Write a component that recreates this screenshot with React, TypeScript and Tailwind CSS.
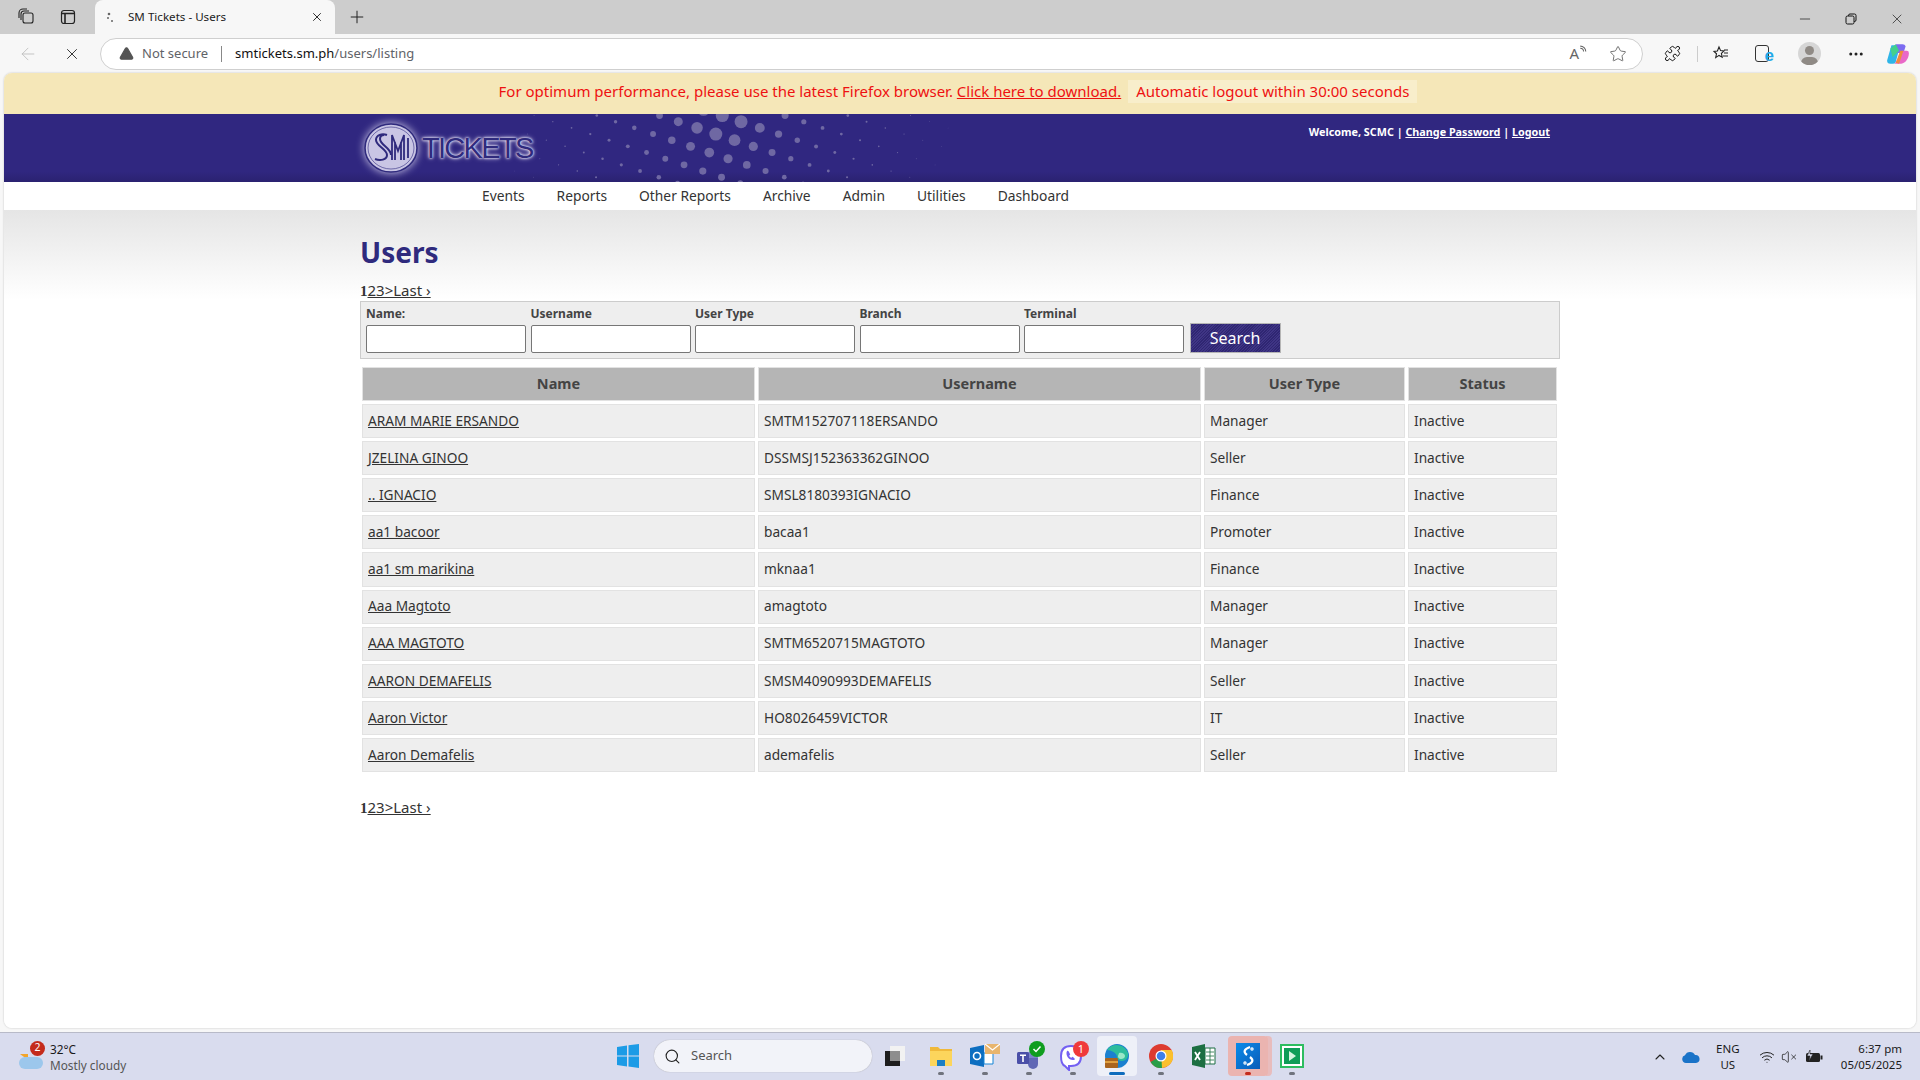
import {
  ArrowLeft,
  ChevronUp,
  Ellipsis,
  Minus,
  Plus,
  Puzzle,
  Search,
  Star,
  TriangleAlert,
  VolumeX,
  Wifi,
  X,
} from "lucide-react";

const rows = [
  ["ARAM MARIE ERSANDO", "SMTM152707118ERSANDO", "Manager"],
  ["JZELINA GINOO", "DSSMSJ152363362GINOO", "Seller"],
  [".. IGNACIO", "SMSL8180393IGNACIO", "Finance"],
  ["aa1 bacoor", "bacaa1", "Promoter"],
  ["aa1 sm marikina", "mknaa1", "Finance"],
  ["Aaa Magtoto", "amagtoto", "Manager"],
  ["AAA MAGTOTO", "SMTM6520715MAGTOTO", "Manager"],
  ["AARON DEMAFELIS", "SMSM4090993DEMAFELIS", "Seller"],
  ["Aaron Victor", "HO8026459VICTOR", "IT"],
  ["Aaron Demafelis", "ademafelis", "Seller"],
];

const filters = ["Name:", "Username", "User Type", "Branch", "Terminal"];

// banner dots: diagonal lattice, radius falls off from the peak
function bannerDots() {
  const dots: { x: number; y: number; r: number }[] = [];
  for (let i = -16; i < 18; i++) {
    for (let j = -7; j < 7; j++) {
      const x = 678.3 + i * 18.75 - j * 6.5 - 510;
      const y = 121.7 + i * 6.17 + j * 18.5 - 114;
      if (y < -8 || y > 72 || x < 0 || x > 500) continue;
      const d = Math.hypot(x + 510 - 723, y + 114 - 115);
      const r = Math.min(6.5, 9 * Math.exp(-d / 65));
      if (r > 0.25) dots.push({ x, y, r });
    }
  }
  return dots;
}

function Pager() {
  return (
    <div className="text-[15px] leading-[18px] text-[#333]">
      <b className="font-['Liberation_Serif',serif] text-[15px]">1</b>
      <span className="underline">23&gt;Last ›</span>
    </div>
  );
}

function Logo() {
  return (
    <div className="flex items-center">
      <svg width="56" height="52" viewBox="0 0 56 52" className="drop-shadow-[0_0_4px_#cfcbe8]">
        <ellipse cx="28" cy="26" rx="26" ry="24" fill="#c9c5e4" stroke="#2f2a7d" strokeWidth="1.6" />
        <ellipse cx="28" cy="26" rx="23" ry="21" fill="#c9c5e4" stroke="#2f2a7d" strokeWidth="0.6" />
        <path d="M24 13c-5-2-11 0-11 5 0 6 11 9 11 15 0 5-7 6-12 4M21 13c-3 0-4 2-4 4 0 6 11 9 11 16" fill="none" stroke="#2f2a7d" strokeWidth="2" />
        <path d="M29 38V13l6 16 6-16v25M32 38V20M38 38V20M45 16v20" fill="none" stroke="#2f2a7d" strokeWidth="1.8" />
      </svg>
      <span className="ml-[3px] font-['Liberation_Sans',sans-serif] text-[29px] leading-none tracking-[-1.7px] text-[#2f2a7d] [text-shadow:0_0_2px_#e5e2f5,0_0_3px_#e5e2f5,0_0_5px_#cfcbe8]">
        TICKETS
      </span>
    </div>
  );
}

function Header() {
  return (
    <div className="h-[68px] shrink-0 bg-[linear-gradient(#302780_85%,#2a2270)]">
      <div className="relative mx-auto flex h-full w-[1200px] pl-[3px]">
        <svg width="500" height="68" className="absolute left-[150px] top-0">
          {bannerDots().map((d, i) => (
            <circle key={i} cx={d.x} cy={d.y} r={d.r} fill="#6f68a3" />
          ))}
        </svg>
        <div className="relative mt-[8px]">
          <Logo />
        </div>
        <div className="absolute right-[10px] top-[10px] text-[10.8px] font-bold leading-[16px] text-white">
          Welcome, SCMC | <span className="underline">Change Password</span> | <span className="underline">Logout</span>
        </div>
      </div>
    </div>
  );
}

function Table() {
  const cell = "flex h-[34.12px] items-center border border-[#e2e2e2] bg-[#eeeeee] px-[5px] text-[13.7px] text-[#333]";
  const head = "flex h-[34px] items-center justify-center border border-[#e2e2e2] bg-[#b5b5b5] text-[14.5px] font-bold text-[#444]";
  return (
    <div className="mx-[2px] mt-[8px] grid grid-cols-[393px_443px_201px_149px] gap-[3px]">
      <div className={head}>Name</div>
      <div className={head}>Username</div>
      <div className={head}>User Type</div>
      <div className={head}>Status</div>
      {rows.map((r) => (
        <div key={r[1]} className="contents">
          <div className={cell}>
            <span className="underline">{r[0]}</span>
          </div>
          <div className={cell}>{r[1]}</div>
          <div className={cell}>{r[2]}</div>
          <div className={cell}>Inactive</div>
        </div>
      ))}
    </div>
  );
}

function Page() {
  return (
    <div className="flex min-h-0 flex-1 flex-col overflow-hidden rounded-[8px] bg-white font-['Noto_Sans',sans-serif] shadow-[0_0_2px_#bbb]">
      <div className="flex h-[41px] shrink-0 items-center justify-center gap-[7px] bg-[#f5e7b8] pb-[4px] pr-[4px] text-[15px] text-[#ee1111]">
        <span>
          For optimum performance, please use the latest Firefox browser. <span className="underline">Click here to download.</span>
        </span>
        <span className="bg-[#f8eecb] px-[8px]">Automatic logout within 30:00 seconds</span>
      </div>
      <Header />
      <div className="flex h-[28px] shrink-0 items-center gap-[32px] bg-white pl-[478px] text-[13.8px] text-[#333]">
        <span>Events</span>
        <span>Reports</span>
        <span>Other Reports</span>
        <span>Archive</span>
        <span>Admin</span>
        <span>Utilities</span>
        <span>Dashboard</span>
      </div>
      <div className="flex-1 bg-[linear-gradient(#e5e5e5,#ffffff_90px)]">
        <div className="mx-auto w-[1200px] pt-[24px]">
          <h1 className="h-[36px] text-[28px] font-bold leading-[36px] text-[#2f2a7d]">Users</h1>
          <div className="mb-[1px] mt-[11px]">
            <Pager />
          </div>
          <div className="flex h-[58px] items-start gap-[4.5px] border border-[#cccccc] bg-[#eeeeee] pl-[5px] pt-[3px]">
            {filters.map((f) => (
              <div key={f} className="flex flex-col">
                <label className="h-[20px] text-[12px] font-bold leading-[18px] text-[#444]">{f}</label>
                <input className="h-[28px] w-[160px] rounded-[2px] border border-[#767676] bg-white" />
              </div>
            ))}
            <button className="ml-[1px] mt-[18px] h-[30px] w-[91px] border border-[#b5b5b5] bg-[repeating-linear-gradient(135deg,#3f3585_0,#3f3585_1px,#2f2672_1px,#2f2672_2px)] text-[16px] text-white">
              Search
            </button>
          </div>
          <Table />
          <div className="mt-[26px]">
            <Pager />
          </div>
        </div>
      </div>
    </div>
  );
}

function BrowserChrome() {
  return (
    <div className="font-['Noto_Sans',sans-serif]">
      <div className="flex h-[34px] items-end bg-[#cdcdcd]">
        <div className="flex w-[95px] items-center self-center pl-[17px] text-[#222]">
          <svg width="18" height="18" viewBox="0 0 18 18" fill="none" stroke="#222" strokeWidth="1.1">
            <rect x="6" y="5" width="10" height="10" rx="2" />
            <path d="M4 12V6a3 3 0 0 1 3-3h5M2 10V5a4 4 0 0 1 4-4h4" />
          </svg>
          <svg width="16" height="16" viewBox="0 0 16 16" fill="none" stroke="#222" strokeWidth="1.2" className="ml-[25px]">
            <rect x="1.5" y="1.5" width="13" height="13" rx="2.5" />
            <path d="M1.5 4.5h13M5 4.5v10" strokeWidth="1.6" />
          </svg>
        </div>
        <div className="flex h-[34px] w-[240px] items-center rounded-t-[8px] bg-[#f7f7f7] pl-[8px] pr-[11px]">
          <svg width="16" height="16" viewBox="0 0 16 16" fill="#666">
            <circle cx="6" cy="5" r="1.3" />
            <circle cx="5" cy="9" r="1" />
            <circle cx="9" cy="12" r="1" />
          </svg>
          <span className="ml-[9px] flex-1 text-[11.6px] text-[#222]">SM Tickets - Users</span>
          <X size={14} strokeWidth={1.6} color="#222" />
        </div>
        <Plus size={20} strokeWidth={1.2} color="#222" className="mb-[7px] ml-[12px]" />
        <div className="flex-1" />
        <div className="mb-[7px] flex items-center gap-[32px] pr-[15px]">
          <Minus size={16} strokeWidth={1} color="#111" />
          <svg width="12" height="12" viewBox="0 0 12 12" fill="none" stroke="#111">
            <rect x="1" y="3" width="8" height="8" rx="1.5" />
            <path d="M3.5 3V2.5A1.5 1.5 0 0 1 5 1h4.5A1.5 1.5 0 0 1 11 2.500V7a1.500 1.500 0 0 1-1.500 1.500H9" />
          </svg>
          <X size={16} strokeWidth={1} color="#111" />
        </div>
      </div>
      <div className="flex h-[39px] items-center bg-[#f7f7f7]">
        <ArrowLeft size={20} strokeWidth={1} color="#bbb" className="ml-[18px]" />
        <X size={18} strokeWidth={1.2} color="#222" className="ml-[25px]" />
        <div className="ml-[19px] flex h-[32px] w-[1543px] items-center rounded-full border border-[#cfcfcf] bg-white pl-[18px] pr-[15px] text-[13px]">
          <TriangleAlert size={15} color="#555" fill="#555" stroke="#555" />
          <span className="ml-[8px] text-[#5f6368]">Not secure</span>
          <span className="mx-[13px] h-[16px] w-px bg-[#888]" />
          <span className="text-[#111]">smtickets.sm.ph</span>
          <span className="text-[#5f6368]">/users/listing</span>
          <div className="flex-1" />
          <span className="text-[15px] text-[#666]">A</span>
          <svg width="8" height="11" viewBox="0 0 7 10" fill="none" stroke="#666" className="mb-[6px]">
            <path d="M1 3a3 3 0 0 1 3 3M1 1a5 5 0 0 1 5 5" />
          </svg>
          <Star size={18} strokeWidth={1.1} color="#555" className="ml-[22px]" />
        </div>
        <Puzzle size={17} strokeWidth={1.4} color="#111" className="ml-[21px]" />
        <span className="ml-[16px] h-[16px] w-px bg-[#ccc]" />
        <svg width="17" height="17" viewBox="0 0 17 17" fill="none" stroke="#222" strokeWidth="1.1" className="ml-[14px]">
          <path d="M7 2l1.600 3.600 3.400.4-2.600 2.400.8 3.800L7 10.400 3.700 12.600l.8-3.800L2 6.400 5.400 6z" />
          <path d="M12 5h4M12 8h4M11 11h5" />
        </svg>
        <div className="relative ml-[26px] h-[17px] w-[14px] rounded-[3px] border border-[#333]">
          <span className="absolute -bottom-[3px] -right-[6px] font-['Liberation_Sans',sans-serif] text-[17px] font-bold leading-[17px] text-[#1fa8e8]">e</span>
        </div>
        <div className="relative ml-[29px] h-[23px] w-[23px] overflow-hidden rounded-full bg-[#d6d6d6]">
          <span className="absolute left-[7px] top-[4px] h-[9px] w-[9px] rounded-full bg-[#8f8a85]" />
          <span className="absolute left-[3px] top-[15px] h-[12px] w-[17px] rounded-full bg-[#8f8a85]" />
        </div>
        <Ellipsis size={18} color="#222" className="ml-[26px]" />
        <svg width="24" height="24" viewBox="0 0 22 22" className="ml-[21px]">
          <path d="M5 3h8L9 18a3 3 0 0 1-3 2H4a3 3 0 0 1-3-3z" fill="#2fb5e8" />
          <path d="M9 2h6a3 3 0 0 1 3 2l-2 6H7z" fill="#7c6cf0" />
          <path d="M15 8h4a2 2 0 0 1 2 2c0 5-3 9-7 10H8z" fill="#e968c8" />
          <path d="M9 19l4-11 3 0-4 12z" fill="#f08a3c" />
          <path d="M4 6l5-4 3 6-6 6z" fill="#43d08c" />
        </svg>
      </div>
    </div>
  );
}

function Dot({ active = false, red = false }: { active?: boolean; red?: boolean }) {
  return (
    <span
      className={`absolute bottom-[1px] left-1/2 h-[3px] -translate-x-1/2 rounded-full ${
        active ? "w-[16px] bg-[#0f6cbd]" : red ? "w-[6px] bg-[#c42b1c]" : "w-[6px] bg-[#70737d]"
      }`}
    />
  );
}

function TaskIcon({ children, dot = true, active = false, red = false }: { children: React.ReactNode; dot?: boolean; active?: boolean; red?: boolean }) {
  return (
    <div
      className={`relative flex h-[40px] w-[40px] items-center justify-center rounded-[4px] ${
        active ? "bg-[#eef0f8]" : red ? "bg-[#ebb4b0]" : ""
      }`}
    >
      {red && <span className="absolute -right-[4px] top-0 h-[40px] w-[6px] rounded-r-[4px] bg-[#ebb4b0] opacity-80" />}
      {children}
      {dot && <Dot active={active} red={red} />}
    </div>
  );
}

function Taskbar() {
  return (
    <div className="relative flex h-[48px] shrink-0 items-center border-t border-[#b8bac8] bg-[#d9dcee] font-['Noto_Sans',sans-serif] text-[#1a1a1a]">
      <div className="flex w-[640px] items-center pl-[18px]">
        <div className="relative h-[32px] w-[32px]">
          <span className="absolute left-[2px] top-[13px] h-0 w-0 border-l-[8px] border-t-[6px] border-l-transparent border-t-[#f2a52a]" />
          <span className="absolute left-[1px] top-[16px] h-[12px] w-[24px] rounded-full bg-[#9cc7ec]" />
          <span className="absolute left-[12px] top-[0px] flex h-[15px] w-[15px] items-center justify-center rounded-full bg-[#c42b1c] text-[10.5px] text-white">2</span>
        </div>
        <div className="text-[11.8px] leading-[16px]">
          <div>32°C</div>
          <div className="text-[#555]">Mostly cloudy</div>
        </div>
      </div>
      <div className="absolute left-[608px] top-[3px] flex items-center">
        <TaskIcon dot={false}>
          <svg width="24" height="24" viewBox="0 0 24 24">
            <path d="M1 3l10-1.500V11.500H1zM12.500 1.300L23 0V11.500H12.500zM1 12.500h10V22.500L1 21zM12.500 12.500H23V24l-10.500-1.500z" fill="#1c9be6" />
          </svg>
        </TaskIcon>
        <div className="ml-[6px] flex h-[32px] w-[218px] items-center rounded-full bg-[#f2f3f9] pl-[10px] text-[13px] text-[#555] shadow-[0_0_1px_#999]">
          <Search size={17} color="#222" strokeWidth={1.6} />
          <span className="ml-[10px]">Search</span>
        </div>
        <div className="ml-[3px] flex items-center">
          <TaskIcon dot={false}>
            <div className="relative h-[20px] w-[20px]">
              <span className="absolute bottom-0 left-0 h-[15px] w-[15px] bg-[#1d1d1d]" />
              <span className="absolute right-0 top-0 h-[15px] w-[15px] bg-[#f2f2f2]" />
              <span className="absolute left-[5px] top-[5px] h-[10px] w-[10px] bg-[#8e8e8e]" />
            </div>
          </TaskIcon>
          <div className="ml-[6px]">
            <TaskIcon>
              <svg width="24" height="22" viewBox="0 0 24 22">
                <path d="M1 2h8l2 2h12v16H1z" fill="#f0b93a" />
                <path d="M1 6h22v15H1z" fill="#fcd55c" />
                <path d="M8 15h8v6H8z" fill="#1b7fc4" />
              </svg>
            </TaskIcon>
          </div>
          <div className="ml-[4px]">
            <TaskIcon>
              <svg width="30" height="26" viewBox="0 0 30 26">
                <path d="M0 5l14-3v22L0 21z" fill="#0d6ec0" />
                <circle cx="7" cy="13" r="3.500" fill="none" stroke="#fff" strokeWidth="1.600" />
                <path d="M14 10h9v11h-9z" fill="#fff" stroke="#1685d6" />
                <path d="M15 1h15v10H15z" fill="#e8b56e" />
                <path d="M15 1l7.500 6L30 1" fill="none" stroke="#fff" strokeWidth="1.200" />
              </svg>
            </TaskIcon>
          </div>
          <div className="ml-[4px]">
            <TaskIcon>
              <svg width="32" height="30" viewBox="0 0 32 30">
                <circle cx="19" cy="16" r="6" fill="#7b83c9" />
                <path d="M15 17h10v6a5 5 0 0 1-10 0z" fill="#6067b5" />
                <rect x="4" y="11" width="12" height="12" rx="1.500" fill="#4a4fa8" />
                <path d="M7 13.500h6v1.500h-2.200V21H9.200v-6H7z" fill="#fff" />
                <circle cx="24" cy="8" r="8" fill="#0f9d1f" />
                <path d="M20.500 8l2.500 2.500 4.500-5" fill="none" stroke="#fff" strokeWidth="1.500" />
              </svg>
            </TaskIcon>
          </div>
          <div className="ml-[4px]">
            <TaskIcon>
              <svg width="32" height="30" viewBox="0 0 32 30">
                <path d="M14 5c7 0 10 3 10 10s-4 10-10 10h-2v4l-4-4c-3-1-4-5-4-10 0-7 3-10 10-10z" fill="#fff" stroke="#7360f2" strokeWidth="2" />
                <path d="M10 10c2-1 2 2 3 3s-2 1 0 3 2-1 3 0 3 2 1 3c-5 1-9-5-7-9z" fill="#7360f2" />
                <circle cx="24" cy="8" r="8" fill="#f03a3a" />
                <text x="24" y="12" fontSize="11" fill="#fff" textAnchor="middle">1</text>
              </svg>
            </TaskIcon>
          </div>
          <div className="ml-[4px]">
            <TaskIcon active>
              <svg width="26" height="26" viewBox="0 0 26 26">
                <circle cx="13" cy="13" r="12" fill="#1b80cf" />
                <path d="M3 7a12 12 0 0 1 21 3c1 5-3 8-6 8-3 0-5-2-5-4 0-4-6-7-10-7z" fill="#2dbc9c" />
                <path d="M15 10c3-1 6 1 6 3s-2 3-4 3-3-1-3-3z" fill="#9be8c8" />
                <rect x="1" y="15" width="13" height="10" rx="1" fill="#a9641f" />
                <rect x="1" y="18" width="13" height="2" fill="#e0a040" />
              </svg>
            </TaskIcon>
          </div>
          <div className="ml-[4px]">
            <TaskIcon>
              <svg width="24" height="24" viewBox="0 0 24 24">
                <circle cx="12" cy="12" r="12" fill="#dd3b30" />
                <path d="M12 12L1.600 18a12 12 0 0 0 12 5.900z" fill="#2a9d48" />
                <path d="M12 6h10.600A12 12 0 0 1 13 24z" fill="#fbc02d" />
                <circle cx="12" cy="12" r="5.500" fill="#fff" />
                <circle cx="12" cy="12" r="4.300" fill="#3f7fe8" />
              </svg>
            </TaskIcon>
          </div>
          <div className="ml-[3px]">
            <TaskIcon dot={false}>
              <svg width="24" height="24" viewBox="0 0 24 24">
                <path d="M0 3l13-3v24L0 21z" fill="#1d6f42" />
                <path d="M13 4h10v16H13z" fill="#fff" stroke="#1d6f42" />
                <path d="M14 8h8M14 12h8M14 16h8M18 4v16" stroke="#1d6f42" strokeWidth="0.800" />
                <path d="M3 8l5 8M8 8l-5 8" stroke="#fff" strokeWidth="1.800" />
              </svg>
            </TaskIcon>
          </div>
          <div className="ml-[4px]">
            <TaskIcon red>
              <div className="relative flex h-[26px] w-[24px] items-center justify-center bg-[linear-gradient(135deg,#0b8bea,#0a5cb8)]">
                <svg width="16" height="22" viewBox="0 0 16 22" fill="none" stroke="#fff" strokeWidth="2.200">
                  <path d="M10 2C4 4 3 7 7 10" />
                  <path d="M7 20c6-2 7-5 3-8" />
                  <circle cx="12" cy="4" r="0.600" />
                  <circle cx="5" cy="18" r="0.600" />
                </svg>
              </div>
            </TaskIcon>
          </div>
          <div className="ml-[4px]">
            <TaskIcon>
              <svg width="24" height="24" viewBox="0 0 24 24">
                <rect width="24" height="24" fill="#2dbd60" />
                <rect x="2" y="2" width="20" height="20" fill="#fff" />
                <rect x="4" y="4" width="16" height="16" fill="#0f9d58" />
                <path d="M9 7l7 5-7 5z" fill="#d6f5e0" />
              </svg>
            </TaskIcon>
          </div>
        </div>
      </div>
      <div className="flex-1" />
      <div className="flex items-center pr-[18px] text-[11.5px]">
        <ChevronUp size={16} strokeWidth={1.6} color="#222" />
        <svg width="18" height="12" viewBox="0 0 18 12" className="ml-[14px]">
          <path d="M4 12a4 4 0 0 1-1-7.800A5.500 5.500 0 0 1 13 4a4 4 0 0 1 1 8z" fill="#1a73c8" />
        </svg>
        <div className="ml-[14px] w-[28px] text-center text-[11.5px] leading-[16px]">
          <div>ENG</div>
          <div>US</div>
        </div>
        <Wifi size={16} strokeWidth={1.5} color="#222" className="ml-[17px]" />
        <VolumeX size={16} strokeWidth={1.2} color="#222" className="ml-[6px]" />
        <svg width="18" height="14" viewBox="0 0 18 14" className="ml-[8px]">
          <rect x="1" y="3" width="14" height="9" rx="1.500" fill="#222" />
          <rect x="15.500" y="5.500" width="2" height="4" fill="#222" />
          <path d="M5 0L2 6h3l-1 5 4-7H5z" fill="#d9dcee" stroke="#222" strokeWidth="0.600" />
        </svg>
        <div className="ml-[18px] text-right text-[11.5px] leading-[16px]">
          <div>6:37 pm</div>
          <div>05/05/2025</div>
        </div>
      </div>
    </div>
  );
}

export default function App() {
  return (
    <div className="flex h-screen w-full flex-col overflow-hidden bg-[#f7f7f7]">
      <BrowserChrome />
      <div className="flex min-h-0 flex-1 flex-col px-[4px] pb-[4px]">
        <Page />
      </div>
      <Taskbar />
    </div>
  );
}
